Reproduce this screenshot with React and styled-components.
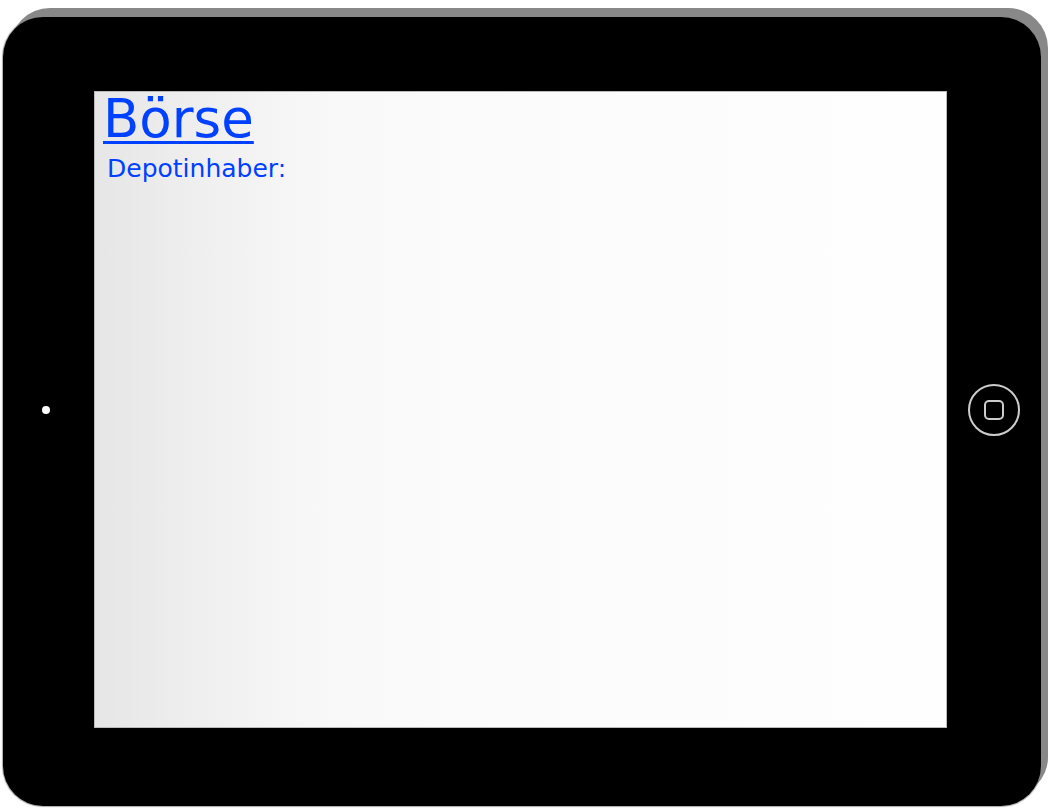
import React from 'react';
import styled, { createGlobalStyle } from 'styled-components';

const GlobalStyle = createGlobalStyle`
  html, body {
    margin: 0;
    padding: 0;
    background: #fff;
    font-family: "DejaVu Sans", Verdana, sans-serif;
  }
`;

const Page = styled.div`
  width: 1052px;
  height: 810px;
  padding: 17px 0 0 3px;
  box-sizing: border-box;
`;

const Tablet = styled.div`
  width: 1038px;
  height: 789px;
  box-sizing: border-box;
  background: #000;
  border-radius: 40px;
  box-shadow: 7px -9px 0 0 #888, 0 0 1px 1px #aaa;
  display: grid;
  grid-template-columns: 91px 853px 1fr;
  grid-template-rows: 637px;
  padding-top: 74px;
  align-items: center;
`;

const Side = styled.div`
  display: flex;
  align-items: center;
  justify-content: ${p => (p.left ? 'flex-start' : 'center')};
  padding-left: ${p => (p.left ? '39px' : '0')};
`;

const Camera = styled.div`
  width: 8px;
  height: 8px;
  border-radius: 50%;
  background: #fff;
`;

const HomeButton = styled.div`
  width: 48px;
  height: 48px;
  border: 2px solid #ccc;
  border-radius: 50%;
  display: flex;
  align-items: center;
  justify-content: center;
`;

const HomeSquare = styled.div`
  width: 16px;
  height: 16px;
  border: 2px solid #ccc;
  border-radius: 5px;
`;

const Screen = styled.div`
  height: 637px;
  box-sizing: border-box;
  border: 1px solid #bbb;
  background: linear-gradient(to right, #e6e6e6 0%, #f0f0f0 14%, #f9f9f9 28%, #fcfcfc 60%, #fefefe 100%);
  padding: 0 8px;
`;

const Title = styled.a`
  display: inline-block;
  font-size: 53px;
  line-height: 54px;
  color: #0040ff;
  text-decoration: underline;
  text-decoration-thickness: 3px;
  text-underline-offset: 4px;
  cursor: pointer;
`;

const Owner = styled.div`
  font-size: 25px;
  line-height: 30px;
  color: #0040ff;
  margin-left: 4px;
  margin-top: 8px;
`;

const App = () => (
  <>
    <GlobalStyle />
    <Page>
      <Tablet>
        <Side left>
          <Camera />
        </Side>
        <Screen>
          <Title href="#">Börse</Title>
          <Owner>Depotinhaber:</Owner>
        </Screen>
        <Side>
          <HomeButton>
            <HomeSquare />
          </HomeButton>
        </Side>
      </Tablet>
    </Page>
  </>
);

export default App;
